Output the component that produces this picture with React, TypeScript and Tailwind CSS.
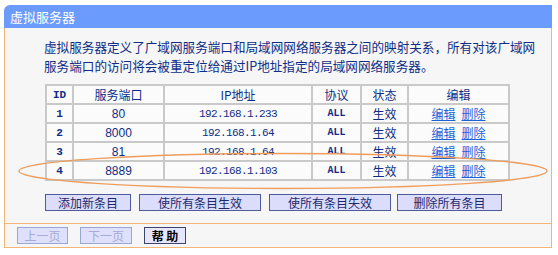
const rows = [
	{ id: "1", port: "80", ip: "192.168.1.233" },
	{ id: "2", port: "8000", ip: "192.168.1.64" },
	{ id: "3", port: "81", ip: "192.168.1.64" },
	{ id: "4", port: "8889", ip: "192.168.1.103" },
];

const cell = "border border-[#c9c9c9] h-[19px] p-0 text-center align-middle leading-[16px]";
const cjk = "font-['Noto_Sans_CJK_SC',sans-serif]";
const mono = "font-['Liberation_Mono',monospace]";

function Btn({ label, w, ml }: { label: string; w: string; ml: string }) {
	return (
		<button className={`${w} ${ml} h-[17px] bg-[#dcdcfb] border border-[#4d5b9c] text-[12px] leading-[15px] text-[#1b2a6e] ${cjk}`}>
			{label}
		</button>
	);
}

export default function App() {
	return (
		<div className={`relative w-[558px] h-[255px] bg-white ${cjk}`}>
			<div className="ml-[4px] pt-[5px] w-[548px]">
				<div className="h-[23px] bg-[#6b9bfc] rounded-tl-[6px] flex items-center pl-[6px] text-white text-[13px]">
					虚拟服务器
				</div>
				<div className="border-x border-b border-[#f4b576] bg-[#f6f6f6]">
					<p className="pt-[9px] pl-[39px] pr-[20px] text-[12.6px] leading-[19px] text-[#102d86] whitespace-nowrap">
						虚拟服务器定义了广域网服务端口和局域网网络服务器之间的映射关系，所有对该广域网
						<br />
						服务端口的访问将会被重定位给通过IP地址指定的局域网网络服务器。
					</p>
					<table className="mt-[9px] ml-[40px] w-[465px] border-separate border-spacing-0 border border-[#c9c9c9] bg-[#fbfbfb] text-[12px] text-[#102d86]">
						<thead>
							<tr>
								<th className={`${cell} w-[27px] font-bold ${mono} text-[11px]`}>ID</th>
								<th className={`${cell} w-[91px] font-normal`}>服务端口</th>
								<th className={`${cell} w-[148px] font-normal`}>IP地址</th>
								<th className={`${cell} w-[49px] font-normal`}>协议</th>
								<th className={`${cell} w-[47px] font-normal`}>状态</th>
								<th className={`${cell} font-normal`}>编辑</th>
							</tr>
						</thead>
						<tbody>
							{rows.map((r) => (
								<tr key={r.id}>
									<td className={`${cell} font-bold ${mono} text-[11px]`}>{r.id}</td>
									<td className={`${cell} font-['Liberation_Sans',sans-serif]`}>{r.port}</td>
									<td className={`${cell} ${mono} text-[11px] tracking-[-0.6px]`}>{r.ip}</td>
									<td className={`${cell} font-bold ${mono} text-[10px]`}>ALL</td>
									<td className={cell}>生效</td>
									<td className={`${cell} text-[#1d63d8]`}>
										<span className="underline">编辑</span>
										<span className="underline ml-[6px]">删除</span>
									</td>
								</tr>
							))}
						</tbody>
					</table>
					<div className="flex mt-[13px] pb-[12px]">
						<Btn label="添加新条目" w="w-[86px]" ml="ml-[40px]" />
						<Btn label="使所有条目生效" w="w-[122px]" ml="ml-[8px]" />
						<Btn label="使所有条目失效" w="w-[122px]" ml="ml-[8px]" />
						<Btn label="删除所有条目" w="w-[105px]" ml="ml-[6px]" />
					</div>
					<div className="border-t border-[#f4b576] flex pt-[3px] pb-[3px]">
						<button className="ml-[12px] w-[51px] h-[17px] bg-[#dfe0fb] border border-[#9aa6d6] text-[12px] leading-[15px] text-[#a3abd6]">上一页</button>
						<button className="ml-[12px] w-[52px] h-[17px] bg-[#dfe0fb] border border-[#9aa6d6] text-[12px] leading-[15px] text-[#a3abd6]">下一页</button>
						<button className="ml-[12px] w-[42px] h-[17px] bg-[#e6e7fc] border border-[#3c4470] text-[12px] leading-[15px] font-bold text-black">帮 助</button>
					</div>
				</div>
			</div>
			<svg className="absolute left-0 top-0 pointer-events-none" width="558" height="255">
				<ellipse cx="283" cy="171" rx="264" ry="17.5" fill="none" stroke="#ef9d5c" strokeWidth="1.4" />
			</svg>
		</div>
	);
}
